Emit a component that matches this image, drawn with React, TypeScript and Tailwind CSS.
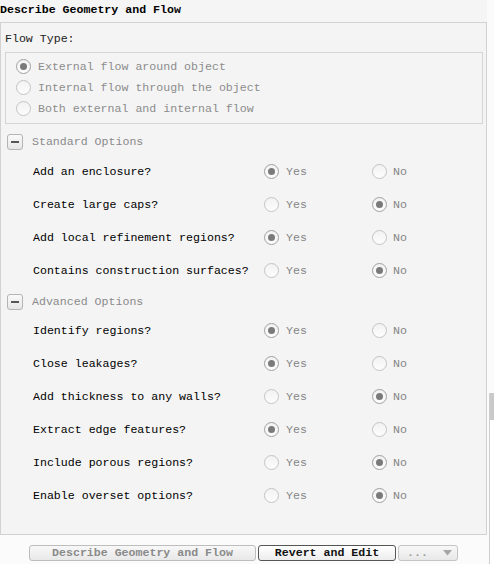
import React from "react";

const mono = { fontFamily: '"Liberation Mono", "DejaVu Sans Mono", monospace' };

function Radio({ checked }: { checked: boolean }) {
  return (
    <span
      className={`flex h-[15px] w-[15px] shrink-0 items-center justify-center rounded-full border bg-gradient-to-b from-[#f2f2f2] to-[#fdfdfd] ${
        checked ? "border-[#a0a0a0]" : "border-[#c4c4c4]"
      }`}
    >
      {checked && <span className="block h-[7px] w-[7px] rounded-full bg-[#7a7a7a]" />}
    </span>
  );
}

function Minus() {
  return (
    <span className="flex h-[16px] w-[16px] shrink-0 items-center justify-center rounded-[3px] border border-[#b4b4b4] bg-gradient-to-b from-[#fafafa] to-[#e6e6e6]">
      <span className="block h-[2px] w-[8px] bg-[#555]" />
    </span>
  );
}

function Header({ label, top }: { label: string; top: string }) {
  return (
    <div className={`flex h-[20px] items-center pl-[6px] ${top}`}>
      <Minus />
      <span className="ml-[9px] text-[#8a8a8a]">{label}</span>
    </div>
  );
}

function Question({ label, yes }: { label: string; yes: boolean }) {
  return (
    <div className="flex h-[33px] items-center">
      <span className="w-[263px] pl-[32px] text-black">{label}</span>
      <div className="flex w-[108px] items-center">
        <Radio checked={yes} />
        <span className="ml-[7px] text-[#858585]">Yes</span>
      </div>
      <div className="flex items-center">
        <Radio checked={!yes} />
        <span className="ml-[6px] text-[#858585]">No</span>
      </div>
    </div>
  );
}

export default function App() {
  const standard: [string, boolean][] = [
    ["Add an enclosure?", true],
    ["Create large caps?", false],
    ["Add local refinement regions?", true],
    ["Contains construction surfaces?", false],
  ];
  const advanced: [string, boolean][] = [
    ["Identify regions?", true],
    ["Close leakages?", true],
    ["Add thickness to any walls?", false],
    ["Extract edge features?", true],
    ["Include porous regions?", false],
    ["Enable overset options?", false],
  ];
  const flows: [string, boolean][] = [
    ["External flow around object", true],
    ["Internal flow through the object", false],
    ["Both external and internal flow", false],
  ];
  return (
    <div className="relative h-[564px] w-[494px] overflow-hidden bg-[#fbfbfb] text-[11.6px]" style={mono}>
      <div className="flex h-[22px] w-[487px] items-center bg-[#f5f5f5] pb-[3px] font-bold text-black">
        Describe Geometry and Flow
      </div>
      <div className="flex h-[513px] w-[487px] flex-col border border-[#d2d2d2] bg-[#f4f4f4]">
        <div className="mt-[8px] flex h-[16px] items-center pl-[4px] text-[#222]">Flow Type:</div>
        <div className="ml-[4px] mt-[5px] w-[478px] border border-[#d6d6d6] pb-[4px] pt-[3px]">
          {flows.map(([t, c]) => (
            <div key={t} className="flex h-[21px] items-center pl-[10px]">
              <Radio checked={c} />
              <span className="ml-[7px] text-[#8c8c8c]">{t}</span>
            </div>
          ))}
        </div>
        <Header label="Standard Options" top="mt-[8px]" />
        <div className="mt-[3px]">
          {standard.map(([t, y]) => (
            <Question key={t} label={t} yes={y} />
          ))}
        </div>
        <Header label="Advanced Options" top="mt-[5px]" />
        <div className="mt-[2px]">
          {advanced.map(([t, y]) => (
            <Question key={t} label={t} yes={y} />
          ))}
        </div>
      </div>
      <div className="mt-[10px] flex h-[16px] items-stretch pl-[29px] font-bold">
        <div className="flex w-[227px] items-center justify-center rounded-[3px] border border-[#bdbdbd] bg-gradient-to-b from-[#f8f8f8] to-[#e8e8e8] text-[#8a8a8a]">
          Describe Geometry and Flow
        </div>
        <div className="ml-[2px] flex w-[138px] items-center justify-center rounded-[3px] border border-[#555] bg-gradient-to-b from-[#ffffff] to-[#ededed] text-[#111]">
          Revert and Edit
        </div>
        <div className="ml-[2px] flex w-[60px] items-center justify-between rounded-[3px] border border-[#c4c4c4] bg-gradient-to-b from-[#f8f8f8] to-[#e8e8e8] pl-[8px] pr-[5px] text-[#9a9a9a]">
          <span>...</span>
          <svg width="9" height="6" viewBox="0 0 9 6">
            <path d="M0 0 H9 L4.5 5.5 Z" fill="#a6a6a6" />
          </svg>
        </div>
      </div>
      <div className="absolute left-[489px] top-[393px] h-[171px] w-[5px] border-l border-[#cfcfcf] bg-white">
        <div className="h-[27px] bg-[#c9c9c9]" />
      </div>
    </div>
  );
}
